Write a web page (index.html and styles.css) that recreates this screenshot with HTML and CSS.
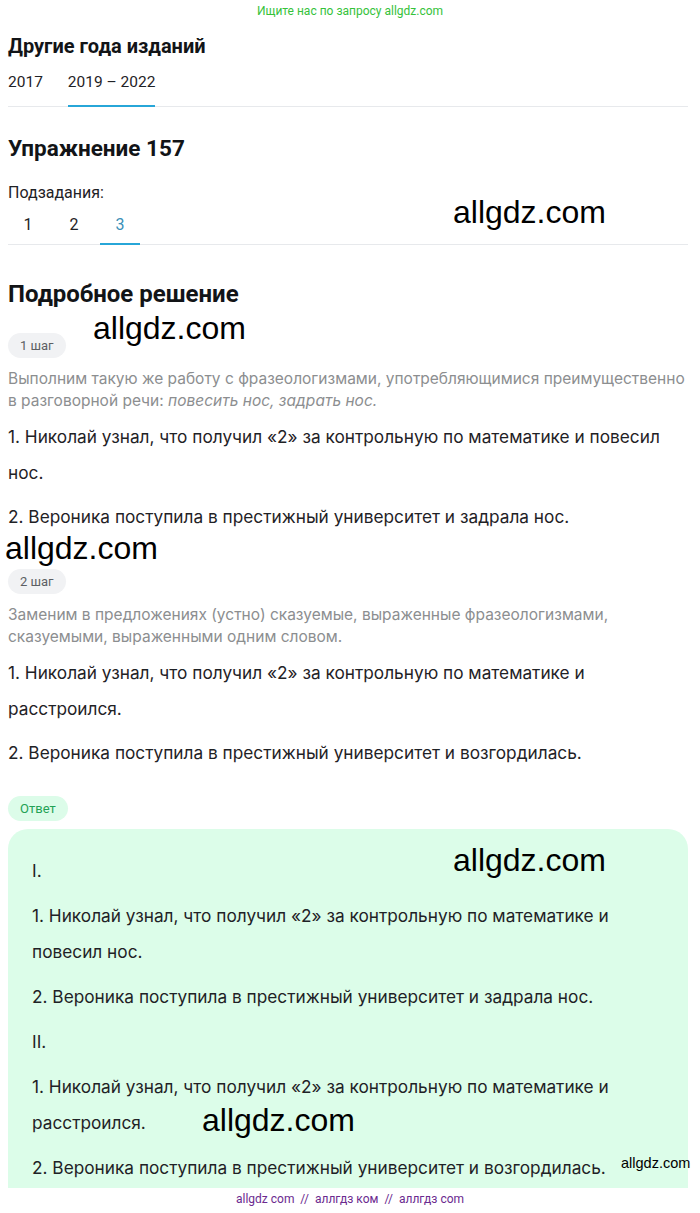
FILE: index.html
```html
<!DOCTYPE html>
<html lang="ru">
<head>
<meta charset="utf-8">
<title>Упражнение 157</title>
<link rel="stylesheet" href="styles.css">
</head>
<body>
<div class="banner">Ищите нас по запросу allgdz.com</div>
<main class="page">
  <h2 class="h-years">Другие года изданий</h2>
  <nav class="tabs">
    <span class="tab">2017</span>
    <span class="tab active">2019 – 2022</span>
  </nav>

  <h1 class="h-ex">Упражнение 157</h1>
  <div class="sub-label">Подзадания:</div>
  <nav class="subtabs">
    <span class="subtab">1</span>
    <span class="subtab">2</span>
    <span class="subtab active">3</span>
  </nav>

  <h2 class="h-sol">Подробное решение</h2>

  <section class="step">
    <span class="pill">1 шаг</span>
    <p class="hint">Выполним такую же работу с фразеологизмами, употребляющимися преимущественно в разговорной речи: <i>повесить нос, задрать нос.</i></p>
    <p class="txt">1. Николай узнал, что получил «2» за контрольную по математике и повесил нос.</p>
    <p class="txt">2. Вероника поступила в престижный университет и задрала нос.</p>
  </section>

  <section class="step step2">
    <span class="pill">2 шаг</span>
    <p class="hint">Заменим в предложениях (устно) сказуемые, выраженные фразеологизмами, сказуемыми, выраженными одним словом.</p>
    <p class="txt">1. Николай узнал, что получил «2» за контрольную по математике и расстроился.</p>
    <p class="txt">2. Вероника поступила в престижный университет и возгордилась.</p>
  </section>

  <span class="pill pill-answer">Ответ</span>
  <div class="answer">
    <p class="txt">I.</p>
    <p class="txt">1. Николай узнал, что получил «2» за контрольную по математике и повесил нос.</p>
    <p class="txt">2. Вероника поступила в престижный университет и задрала нос.</p>
    <p class="txt">II.</p>
    <p class="txt">1. Николай узнал, что получил «2» за контрольную по математике и расстроился.</p>
    <p class="txt">2. Вероника поступила в престижный университет и возгордилась.</p>
  </div>
</main>

<span class="wm wm1">allgdz.com</span>
<span class="wm wm2">allgdz.com</span>
<span class="wm wm3">allgdz.com</span>
<span class="wm wm4">allgdz.com</span>
<span class="wm wm5">allgdz.com</span>
<span class="wm wm-small">allgdz.com</span>

<footer class="footer">allgdz com &nbsp;//&nbsp; аллгдз ком &nbsp;//&nbsp; аллгдз com</footer>
</body>
</html>
```

FILE: styles.css
```css
html, body {
  margin: 0;
  padding: 0;
  background: #ffffff;
}
body {
  font-family: Roboto, "Noto Sans", "DejaVu Sans", sans-serif;
  color: #1f2226;
  position: relative;
  height: 1213px;
  overflow: hidden;
}
.banner {
  font-size: 12px;
  line-height: 22px;
  text-align: center;
  color: #35c23a;
}
.page {
  padding: 0 12px 0 8px;
}
h1, h2, p {
  margin: 0;
}
.h-years {
  margin-top: 12px;
  font-size: 20px;
  line-height: 24px;
  font-weight: 700;
  color: #121417;
}
.tabs {
  display: flex;
  gap: 25px;
  margin-top: 12px;
  border-bottom: 1px solid #e7e9ec;
}
.tab {
  font-size: 15.5px;
  line-height: 24px;
  padding-bottom: 11px;
  border-bottom: 2px solid transparent;
  margin-bottom: -1px;
}
.tab.active {
  border-bottom-color: #27a6d8;
}
.h-ex {
  margin-top: 27px;
  font-size: 22.5px;
  line-height: 28px;
  font-weight: 700;
  color: #121417;
}
.sub-label {
  margin-top: 20px;
  font-size: 16px;
  line-height: 22px;
}
.subtabs {
  display: flex;
  gap: 6px;
  margin-top: 9px;
  border-bottom: 1px solid #e7e9ec;
}
.subtab {
  width: 40px;
  text-align: center;
  font-size: 16px;
  line-height: 24px;
  padding-bottom: 6px;
  border-bottom: 2px solid transparent;
  margin-bottom: -1px;
}
.subtab.active {
  color: #3b8fb8;
  border-bottom-color: #27a6d8;
}
.h-sol {
  margin-top: 35px;
  font-size: 24px;
  line-height: 28px;
  font-weight: 700;
  color: #121417;
}
.step {
  margin-top: 25px;
}
.step2 {
  margin-top: 34px;
}
.pill {
  display: inline-block;
  height: 25px;
  line-height: 25px;
  padding: 0 12px;
  border-radius: 13px;
  background: #f1f2f4;
  color: #5c5f63;
  font-size: 13px;
}
.hint {
  margin-top: 10px;
  font-family: Inter, Roboto, sans-serif;
  font-size: 15.5px;
  line-height: 22px;
  color: #8c8e90;
}
.txt {
  font-family: Inter, Roboto, sans-serif;
  font-size: 17.25px;
  line-height: 36px;
}
.step .hint + .txt {
  margin-top: 7px;
}
.step .txt + .txt {
  margin-top: 8px;
}
.pill-answer {
  margin-top: 25px;
  background: #dcfce9;
  color: #23a255;
}
.answer {
  margin-top: 8px;
  background: #dcfde9;
  border-radius: 20px 20px 0 0;
  padding: 24px 24px 40px 24px;
}
.answer .txt + .txt {
  margin-top: 9px;
}
.wm {
  position: absolute;
  font-family: "Liberation Sans", Arial, sans-serif;
  font-size: 32px;
  line-height: 1;
  color: #000000;
  white-space: nowrap;
}
.wm1 { left: 453px; top: 196px; }
.wm2 { left: 93px; top: 312px; }
.wm3 { left: 5px; top: 532px; }
.wm4 { left: 453px; top: 844px; }
.wm5 { left: 202px; top: 1104px; }
.wm-small {
  font-size: 14.5px;
  left: 621px;
  top: 1156px;
}
.footer {
  position: absolute;
  left: 0;
  right: 0;
  bottom: 0;
  height: 25px;
  background: #ffffff;
  text-align: center;
  font-size: 12px;
  line-height: 22px;
  color: #6b2a8f;
}
```
